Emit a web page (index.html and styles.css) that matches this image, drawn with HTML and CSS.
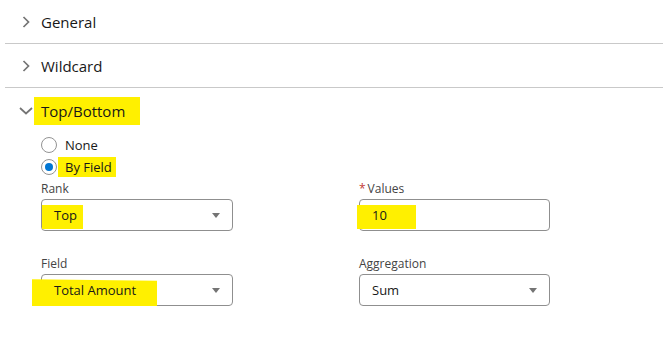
FILE: index.html
```html
<!DOCTYPE html>
<html lang="en">
<head>
<meta charset="UTF-8">
<meta name="viewport" content="width=device-width, initial-scale=1.0">
<title>Top/Bottom Filter</title>
<link rel="stylesheet" href="styles.css">
</head>
<body>

<div class="panel">
    <div class="section">
        <div class="section-header">
            <span class="chevron">
                <svg width="8" height="12" viewBox="0 0 8 12"><path d="M1.5 1 L6.5 6 L1.5 11" fill="none" stroke="#747474" stroke-width="1.7"/></svg>
            </span>
            <span>General</span>
        </div>
    </div>

    <div class="section">
        <div class="section-header">
            <span class="chevron">
                <svg width="8" height="12" viewBox="0 0 8 12"><path d="M1.5 1 L6.5 6 L1.5 11" fill="none" stroke="#747474" stroke-width="1.7"/></svg>
            </span>
            <span>Wildcard</span>
        </div>
    </div>

    <div class="section open">
        <div class="section-header">
            <span class="chevron">
                <svg width="14" height="8" viewBox="0 0 14 8"><path d="M1 1 L7 6.5 L13 1" fill="none" stroke="#747474" stroke-width="1.7"/></svg>
            </span>
            <span class="mark mark-title">Top/Bottom</span>
        </div>

        <div class="section-body">
            <div class="radio-group">
                <label class="radio">
                    <span class="radio-circle"></span>
                    <span>None</span>
                </label>
                <label class="radio">
                    <span class="radio-circle checked"></span>
                    <span class="mark mark-byfield">By Field</span>
                </label>
            </div>

            <div class="form-grid">
                <div class="field">
                    <div class="field-label">Rank</div>
                    <div class="select">
                        <span class="mark mark-top">Top</span>
                        <span class="caret"></span>
                    </div>
                </div>
                <div class="field">
                    <div class="field-label"><span class="required">*</span>Values</div>
                    <div class="input">
                        <span class="mark mark-values">10</span>
                    </div>
                </div>
                <div class="field">
                    <div class="field-label">Field</div>
                    <div class="select">
                        <span class="mark mark-amount">Total Amount</span>
                        <span class="caret"></span>
                    </div>
                </div>
                <div class="field">
                    <div class="field-label">Aggregation</div>
                    <div class="select">
                        <span>Sum</span>
                        <span class="caret"></span>
                    </div>
                </div>
            </div>
        </div>
    </div>
</div>

</body>
</html>
```

FILE: styles.css
```css
body {
    margin: 0;
    padding: 0;
    background: #fff;
    font-family: "Open Sans", Arial, sans-serif;
    color: #181818;
}
.panel {
    margin-left: 5px;
}
.section-header {
    display: flex;
    align-items: center;
    height: 43px;
    padding-left: 13px;
    border-bottom: 1px solid #c9c9c9;
    font-size: 15px;
    color: #181818;
}
.section.open .section-header {
    border-bottom: none;
    height: 46px;
}
.chevron {
    display: flex;
    justify-content: center;
    align-items: center;
    width: 16px;
    margin-right: 7px;
}
.section-body {
    padding-left: 36px;
    font-size: 13px;
}
.radio-group {
    display: flex;
    flex-direction: column;
}
.radio {
    display: flex;
    align-items: center;
    gap: 8px;
    height: 22px;
}
.radio-circle {
    width: 14px;
    height: 14px;
    border: 1px solid #939393;
    border-radius: 50%;
    display: flex;
    align-items: center;
    justify-content: center;
    background: #fff;
}
.radio-circle.checked::after {
    content: "";
    width: 8px;
    height: 8px;
    border-radius: 50%;
    background: #0176d3;
}
.form-grid {
    display: grid;
    grid-template-columns: 192px 191px;
    column-gap: 126px;
    row-gap: 24px;
    margin-top: 2px;
}
.field-label {
    font-size: 12px;
    line-height: 17px;
    color: #444;
    margin-bottom: 2px;
}
.required {
    color: #c23934;
    margin-right: 2px;
}
.select, .input {
    display: flex;
    align-items: center;
    justify-content: space-between;
    height: 30px;
    padding: 0 12px;
    border: 1px solid #8f8f8f;
    border-radius: 4px;
    line-height: 18px;
}
.caret {
    width: 0;
    height: 0;
    border-left: 4.5px solid transparent;
    border-right: 4.5px solid transparent;
    border-top: 5px solid #747474;
}

/* yellow highlighter marks over the screenshot text */
.mark {
    position: relative;
    isolation: isolate;
}
.mark::before {
    content: "";
    position: absolute;
    z-index: -1;
    background: #fff000;
}
.mark-title::before { left: -7px; right: -15px; top: -4px; bottom: -4px; }
.mark-byfield::before { left: -7px; right: -4px; top: -1px; bottom: -1px; }
.mark-top::before { left: -12px; right: -6px; top: -1px; bottom: -5px; }
.mark-values::before { left: -15px; right: -29px; top: -1px; bottom: -5px; }
.mark-amount::before { left: -22px; right: -21px; top: -1px; bottom: -8px; transform: skewY(0.6deg); }
```
